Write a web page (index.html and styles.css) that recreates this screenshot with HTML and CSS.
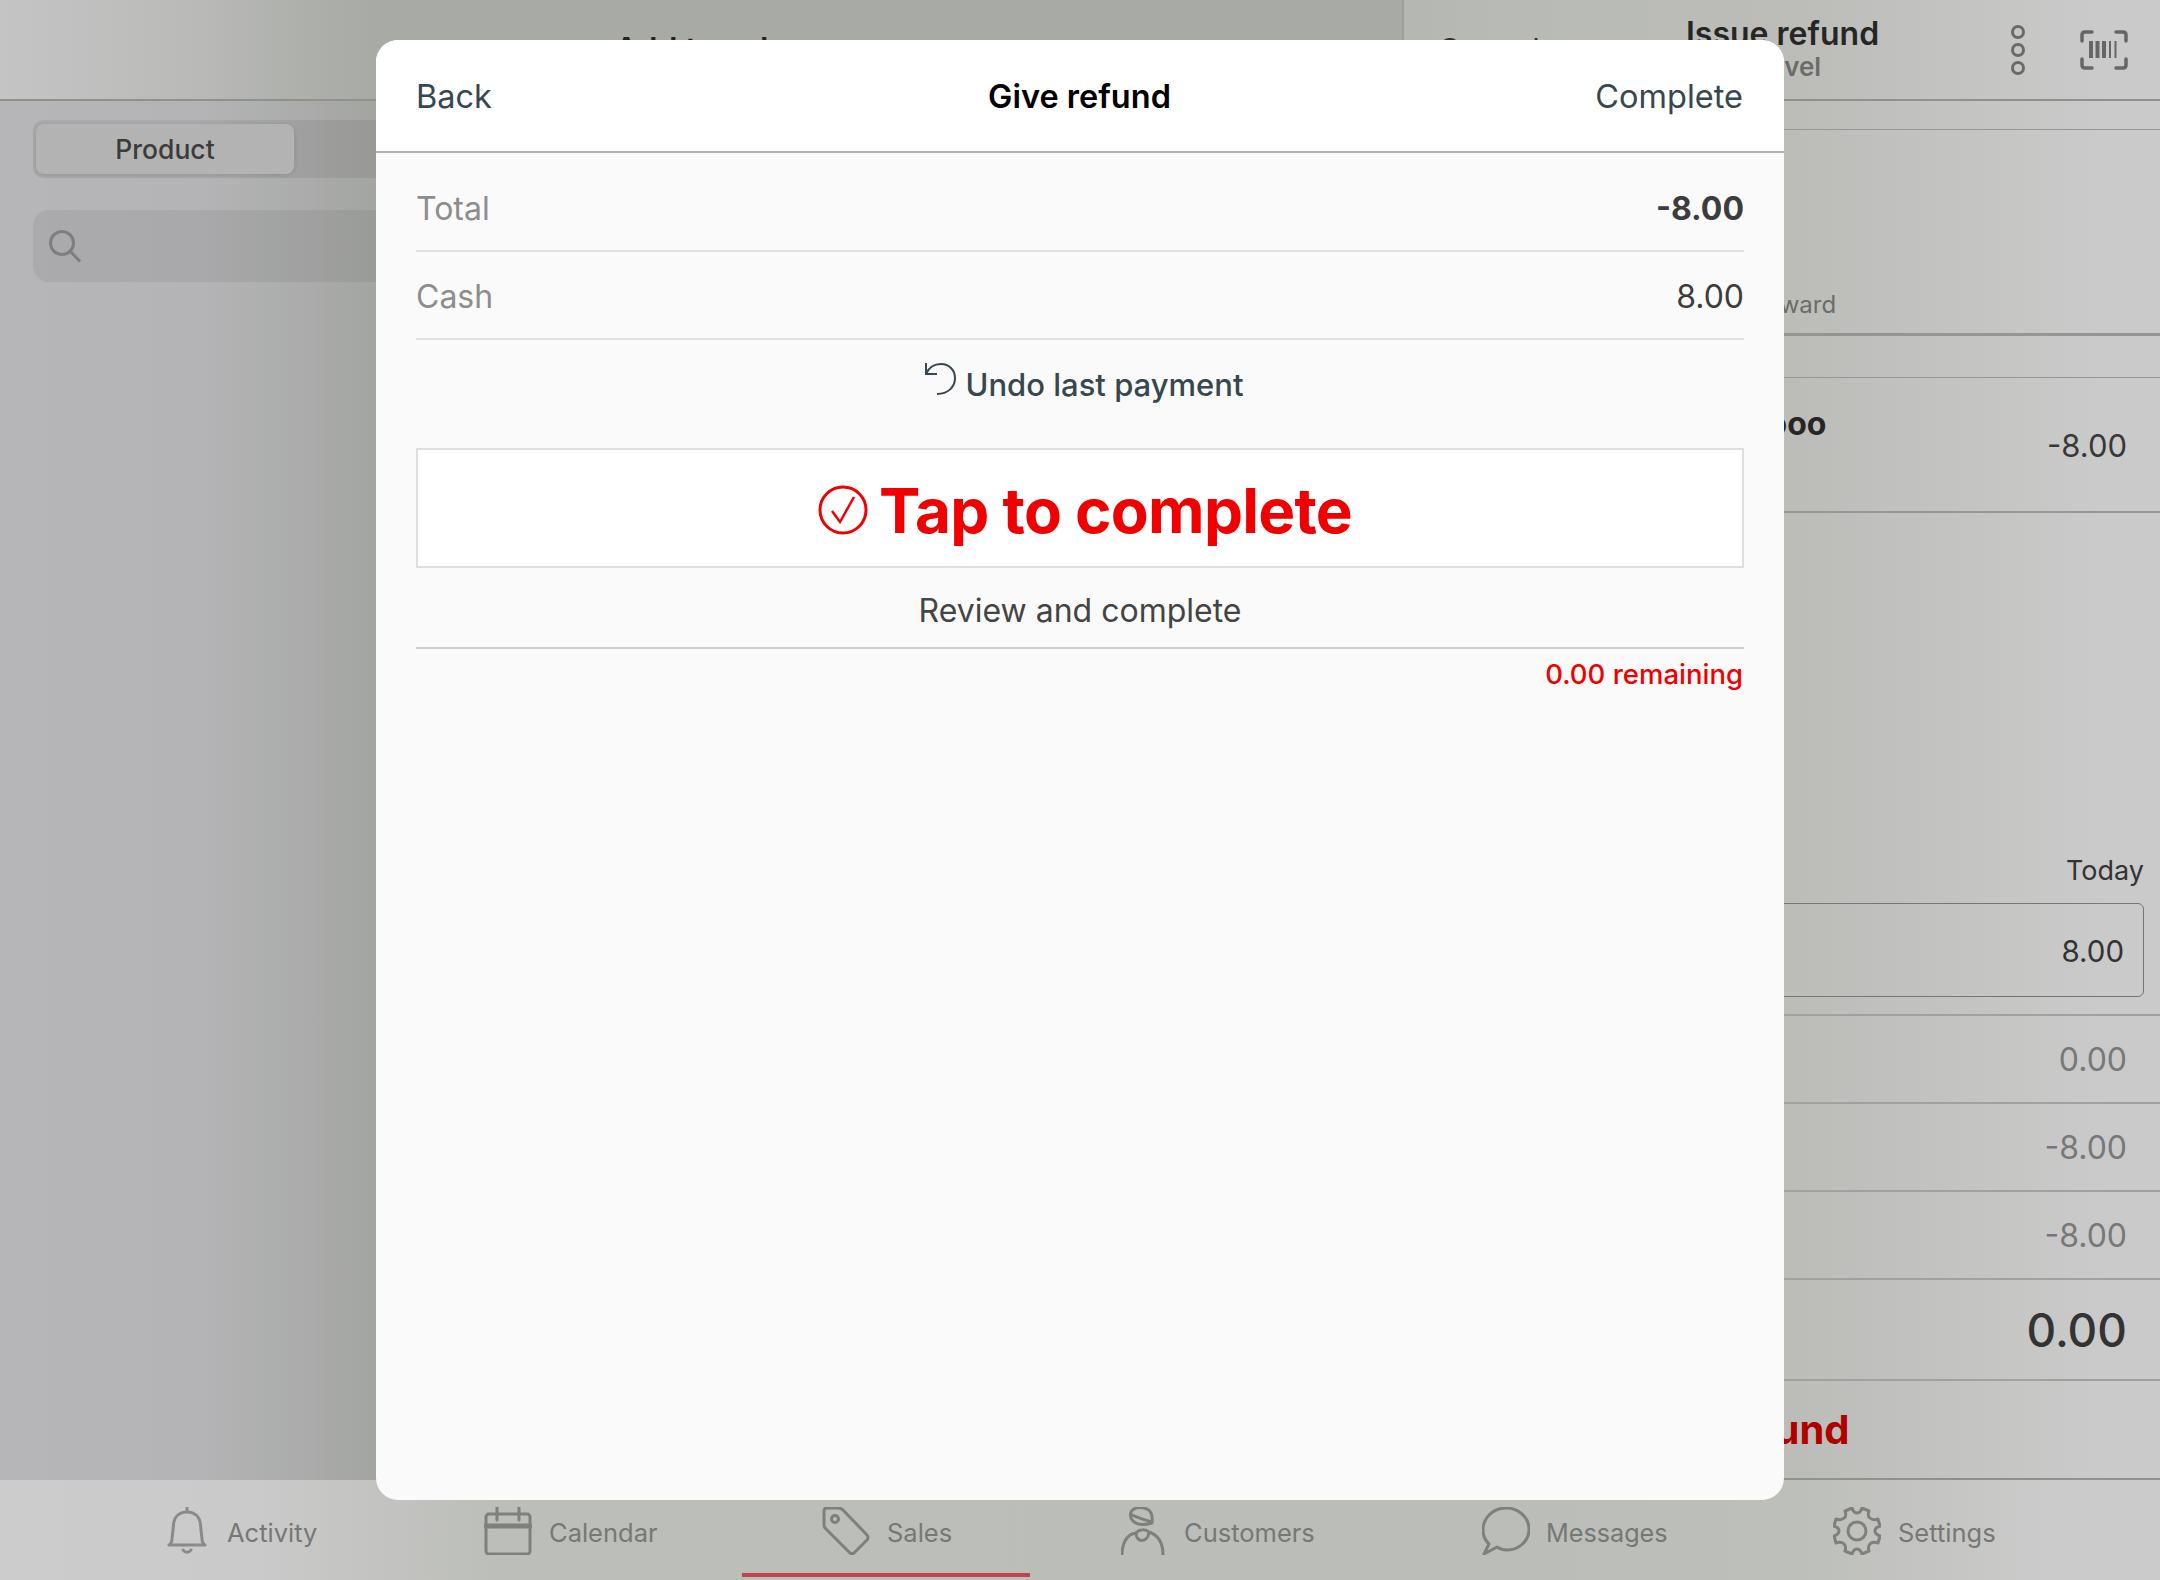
FILE: index.html
```html
<!DOCTYPE html>
<html lang="en">
<head>
<meta charset="utf-8">
<title>Give refund</title>
<link rel="stylesheet" href="styles.css">
</head>
<body>
<div class="app">
  <div class="panes">
    <section class="left">
      <header class="left-head"><span class="left-title">Add to sale</span></header>
      <div class="seg"><div class="seg-tab">Product</div></div>
      <div class="search">
        <svg class="search-ic" viewBox="0 0 34 34" width="34" height="34"><circle cx="14" cy="14" r="11.5"/><path d="M22.5 22.5 L32 32.5"/></svg>
      </div>
    </section>
    <section class="right">
      <header class="right-head">
        <span class="cancel">Cancel</span>
        <div class="right-title"><div class="rt-main">Issue refund</div><div class="rt-sub">Travel</div></div>
        <svg class="dots" viewBox="0 0 16 50" width="16" height="50"><circle cx="8" cy="7" r="5.5"/><circle cx="8" cy="25" r="5.5"/><circle cx="8" cy="43" r="5.5"/></svg>
        <svg class="barcode" viewBox="0 0 48 40" width="48" height="40"><path d="M2 11 V5 Q2 2 5 2 H12 M36 2 H43 Q46 2 46 5 V11 M46 29 V35 Q46 38 43 38 H36 M12 38 H5 Q2 38 2 35 V29"/><path class="bars" d="M11 11 V28 M17.500 11 V28 M24 11 V28"/><path class="bars-thin" d="M30 11 V28 M35.500 11 V28"/></svg>
      </header>
      <div class="gap-a"></div>
      <div class="client"><span class="client-sub">Reward</span></div>
      <div class="gap-b"></div>
      <div class="item"><span class="item-name">Wooo</span><span class="item-val">-8.00</span></div>
      <div class="today">
        <div class="today-label">Today</div>
        <div class="today-box"><span>8.00</span></div>
      </div>
      <div class="sum"><span>0.00</span></div>
      <div class="sum"><span>-8.00</span></div>
      <div class="sum"><span>-8.00</span></div>
      <div class="grand"><span>0.00</span></div>
      <div class="refund"><span>Refund</span></div>
    </section>
  </div>
  <nav class="nav">
    <div class="nav-item">
      <svg class="nav-ic nav-bell" viewBox="0 0 40 48" width="40" height="48"><path d="M20 1 V5 M20 5 C12 5 7 10 6.500 18 L5 32 C5 35 4 37 2 38 H38 C36 37 35 35 35 32 L33.500 18 C33 10 28 5 20 5 Z M16 43 C18 46 22 46 24 43"/></svg>
      <span>Activity</span>
    </div>
    <div class="nav-item">
      <svg class="nav-ic" viewBox="0 0 48 48" width="48" height="48"><rect x="2" y="7" width="44" height="40" rx="3"/><path class="thick" d="M2 19 H46"/><path d="M13 0 V13 M35 0 V13"/></svg>
      <span>Calendar</span>
    </div>
    <div class="nav-item nav-active">
      <svg class="nav-ic" viewBox="0 0 48 48" width="48" height="48"><path d="M2 4 Q2 1 5 1 L16 1 Q19 1 21 3 L45 28 Q47 30.500 45 33 L32 46 Q30 47.500 28 46 L4 22 Q2 20 2 18 Z"/><circle cx="13" cy="12" r="3.500"/></svg>
      <span>Sales</span>
    </div>
    <div class="nav-item">
      <svg class="nav-ic nav-person" viewBox="0 0 44 48" width="44" height="48"><path d="M13 2 C19 -1 28 1 30 6 C32 10 31 14 31 16 C24 18 16 18 12 14 C8 10 9 4 13 2 Z M11 8 C17 11 25 13 31 15"/><path d="M1 48 C1 36 6 27 15 26 C15 36 27 36 28 25 C37 28 42 36 42 48 M15 26 C18 22 25 22 28 25"/></svg>
      <span>Customers</span>
    </div>
    <div class="nav-item">
      <svg class="nav-ic" viewBox="0 0 48 48" width="48" height="48"><path d="M2 47 L7 37 C3 33 1 28 1 23 C1 11 11 1 24 1 C37 1 47 11 47 22 C47 34 37 43 25 43 C21 43 18 42 15 40 Z"/></svg>
      <span class="nav-msg">Messages</span>
    </div>
    <div class="nav-item">
      <svg class="nav-ic" viewBox="0 0 48 48" width="48" height="48"><circle cx="24" cy="24" r="9"/><path d="M19 1 C20 4 21 6 24 6 C27 6 28 4 29 1 L36 4 C35 7 35 10 37 11 C39 13 42 13 45 12 L47 19 C44 20 42 22 42 24 C42 26 44 28 47 29 L45 36 C42 35 39 35 37 37 C35 39 35 41 36 44 L29 47 C28 44 27 42 24 42 C21 42 20 44 19 47 L12 44 C13 41 13 39 11 37 C9 35 6 35 3 36 L1 29 C4 28 6 26 6 24 C6 22 4 20 1 19 L3 12 C6 13 9 13 11 11 C13 10 13 7 12 4 Z"/></svg>
      <span>Settings</span>
    </div>
  </nav>
</div>

<div class="modal">
  <header class="m-head">
    <span class="m-link">Back</span>
    <span class="m-title">Give refund</span>
    <span class="m-link m-link-end">Complete</span>
  </header>
  <div class="m-body">
    <div class="m-row"><span class="m-label">Total</span><span class="m-total">-8.00</span></div>
    <div class="m-row"><span class="m-label">Cash</span><span class="m-val">8.00</span></div>
    <div class="undo">
      <svg class="undo-ic" viewBox="0 0 36 36" width="36" height="36"><path d="M5 13 C8 6 14 3 20 3 C28 3 34 9 34 17 C34 26 27 33 16 33 M5 2 V13 H16"/></svg>
      <span>Undo last payment</span>
    </div>
    <div class="tap">
      <svg class="tap-ic" viewBox="0 0 50 50" width="50" height="50"><circle cx="25" cy="25" r="23"/><path class="tap-check" d="M14 26 L22 37 L36 12"/></svg>
      <span>Tap to complete</span>
    </div>
    <div class="review">Review and complete</div>
    <div class="remaining">0.00 remaining</div>
  </div>
</div>
</body>
</html>
```
FILE: styles.css
```css
* { box-sizing: border-box; }
html, body { margin: 0; height: 100%; }
body {
  font-family: Inter, "Liberation Sans", sans-serif;
  color: #333;
  background: #c8c8c8;
  overflow: hidden;
}
.app {
  width: 2160px;
  height: 1580px;
  display: flex;
  flex-direction: column;
  overflow: hidden;
  background: linear-gradient(90deg, #a6a8a3 0, #a6a8a3 1000px, #b8bab5 1500px, #bcbdb9 1800px, #cacaca 2100px);
}
.panes { flex: 1; display: flex; min-height: 0; }
.left {
  width: 1404px;
  border-right: 2px solid #9d9f9b;
  display: flex;
  flex-direction: column;
  background: linear-gradient(90deg, #b6b6b8 0, #b4b4b6 200px, #aaabaa 310px, #a3a5a1 376px, #a6a8a4 1404px);
}
.left-head {
  height: 101px;
  margin-bottom: 19px;
  border-bottom: 2px solid #8f918d;
  display: flex;
  justify-content: center;
  align-items: center;
  background: linear-gradient(90deg, #c4c4c4 0, #b9bab8 200px, #aeb0ac 300px, #a8aaa6 376px, #a8aaa6 1404px);
}
.left-title { font-size: 32px; font-weight: 600; color: #222; }
.seg {
  margin: 0 0 0 33px;
  width: 1338px;
  height: 58px;
  padding: 4px 3px;
  border-radius: 10px;
  background: rgba(0,0,0,.065);
}
.seg-tab {
  width: 258px;
  height: 50px;
  border-radius: 8px;
  background: #b3b3b3;
  box-shadow: 0 1px 4px rgba(0,0,0,.12);
  display: flex;
  align-items: center;
  justify-content: center;
  font-size: 26.500px;
  font-weight: 450;
  color: #3b3b3b;
}
.search {
  margin: 32px 0 0 33px;
  width: 1338px;
  height: 72px;
  border-radius: 16px;
  background: rgba(0,0,0,.06);
  display: flex;
  align-items: center;
  padding-left: 15px;
}
.search-ic { fill: none; stroke: #7d7e7d; stroke-width: 3; }
.right { flex: 1; display: flex; flex-direction: column; min-width: 0; }
.right-head {
  height: 101px;
  border-bottom: 2px solid #8f918d;
  display: flex;
  align-items: center;
  position: relative;
  padding-left: 34px;
}
.cancel { font-size: 31px; color: #333; width: 248px; }
.right-title { width: 190px; text-align: center; margin-top: -4px; white-space: nowrap; }
.rt-main { font-size: 32px; font-weight: 600; color: #262626; line-height: 38px; }
.rt-sub { font-size: 26px; font-weight: 600; color: #6b6c69; line-height: 28px; padding-left: 3px; }
.dots { margin-left: 134px; fill: none; stroke: #6a6b69; stroke-width: 3; }
.barcode { margin-left: 54px; fill: none; stroke: #666765; stroke-width: 3.500; stroke-linecap: round; }
.barcode .bars { stroke-width: 4; stroke-linecap: butt; }
.barcode .bars-thin { stroke-width: 2; stroke-linecap: butt; }
.gap-a { height: 29px; border-bottom: 1px solid #969895; }
.client {
  height: 206px;
  border-bottom: 3px solid #949693;
  display: flex;
  align-items: flex-end;
  padding: 0 0 14px 347px;
}
.client-sub { font-size: 24px; color: #6b6c69; }
.gap-b { height: 42px; border-bottom: 1px solid #969895; }
.item {
  height: 135px;
  border-bottom: 2px solid #969895;
  display: flex;
  justify-content: space-between;
  align-items: center;
  padding: 2px 33px 0 332px;
}
.item-name { font-size: 32px; font-weight: 700; color: #262626; margin-top: -44px; }
.item-val { font-size: 31px; color: #383838; }
.today { height: 503px; display: flex; flex-direction: column; justify-content: flex-end; align-items: flex-end; padding: 0 16px 17px 0; border-bottom: 2px solid #a0a29f; }
.today-label { font-size: 27px; color: #333; margin-bottom: 16px; }
.today-box {
  width: 700px;
  height: 94px;
  border: 1px solid #777;
  border-radius: 6px;
  display: flex;
  align-items: center;
  justify-content: flex-end;
  padding: 2px 19px 0 0;
  font-size: 29.500px;
  color: #333;
}
.sum {
  height: 88px;
  border-bottom: 2px solid #a0a29f;
  display: flex;
  align-items: center;
  justify-content: flex-end;
  padding-right: 33px;
  font-size: 32px;
  color: #787878;
}
.grand {
  height: 101px;
  border-bottom: 2px solid #a0a29f;
  display: flex;
  align-items: center;
  justify-content: flex-end;
  padding-right: 33px;
  font-size: 46px;
  font-weight: 450;
  color: #333;
}
.refund {
  flex: 1;
  border-bottom: 2px solid #8f918d;
  display: flex;
  align-items: center;
  padding-left: 305px;
  font-size: 40px;
  font-weight: 700;
  color: #b00000;
}
.nav {
  height: 100px;
  position: relative;
  background: linear-gradient(90deg, #cccccc 0, #cacaca 250px, #bcbeb9 500px, #bbbdb8 1500px, #bdbfba 1800px, #cbcbcb 2050px);
}
.nav-item {
  position: absolute;
  top: 27px;
  display: flex;
  align-items: center;
  gap: 17px;
  font-size: 25.500px;
  color: #777875;
  height: 48px;
}
.nav-item span { padding-top: 3px; }
.nav-item .nav-msg { margin-left: -1px; font-size: 25.200px; }
.nav-item:nth-child(1) { left: 167px; }
.nav-item:nth-child(2) { left: 484px; }
.nav-item:nth-child(3) { left: 822px; }
.nav-item:nth-child(4) { left: 1121px; }
.nav-item:nth-child(5) { left: 1482px; }
.nav-item:nth-child(6) { left: 1833px; }
.nav-active::after {
  content: "";
  position: absolute;
  left: -80px;
  width: 288px;
  top: 66px;
  height: 4px;
  background: #c2444a;
}
.nav-ic { fill: none; stroke: #7f807d; stroke-width: 3; stroke-linejoin: round; stroke-linecap: round; flex: none; }
.nav-ic .thick { stroke-width: 5; }
.nav-bell { stroke: #8a8b88; stroke-width: 3; margin-right: 3px; }
.nav-person { margin-right: 2px; }

.modal {
  position: absolute;
  left: 376px;
  top: 40px;
  width: 1408px;
  height: 1460px;
  border-radius: 22px;
  overflow: hidden;
  background: #fafafa;
  display: flex;
  flex-direction: column;
}
.m-head {
  height: 113px;
  background: #fff;
  border-bottom: 2px solid #b0b0b0;
  display: grid;
  grid-template-columns: 1fr auto 1fr;
  align-items: center;
  padding: 2px 41px 0 40px;
}
.m-link { font-size: 32.500px; color: #37474f; }
.m-link-end { text-align: right; }
.m-title { font-size: 32.500px; font-weight: 600; color: #000; }
.m-body { padding: 11px 40px 0; display: flex; flex-direction: column; }
.m-row {
  height: 88px;
  padding-top: 2px;
  border-bottom: 2px solid #e0e0e0;
  display: flex;
  align-items: center;
  justify-content: space-between;
  font-size: 32px;
}
.m-label { color: #8d8d8d; }
.m-total { font-weight: 700; color: #3c3c3c; }
.m-val { color: #3c3c3c; }
.undo {
  height: 108px;
  display: flex;
  align-items: flex-start;
  justify-content: center;
  padding: 26px 0 0 5px;
  gap: 8px;
  font-size: 31px;
  font-weight: 480;
  color: #37474f;
}
.undo-ic { fill: none; stroke: #37474f; stroke-width: 2; margin-top: -5px; }
.tap {
  height: 120px;
  background: #fff;
  border: 2px solid #dedede;
  display: flex;
  align-items: center;
  justify-content: center;
  gap: 11px;
  padding: 4px 0 0 10px;
  font-size: 62px;
  letter-spacing: -.75px;
  font-weight: 700;
  color: #f00000;
}
.tap-ic { fill: none; stroke: #f00000; stroke-width: 3; }
.tap-ic .tap-check { stroke-width: 2.500; }
.review {
  height: 81px;
  padding-top: 5px;
  border-bottom: 2px solid #cfcfd2;
  display: flex;
  align-items: center;
  justify-content: center;
  font-size: 32px;
  color: #444;
}
.remaining {
  text-align: right;
  padding-right: 1px;
  font-size: 27.500px;
  font-weight: 500;
  color: #f00000;
  line-height: 50px;
}
```
